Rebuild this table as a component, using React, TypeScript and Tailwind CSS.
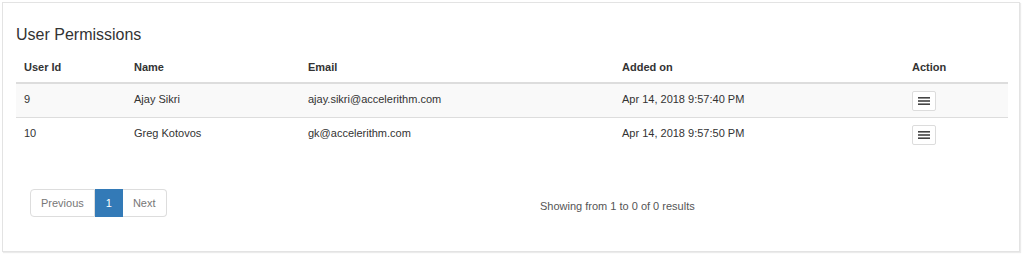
const USERS = [
  { id: 9, name: "Ajay Sikri", email: "ajay.sikri@accelerithm.com", added: "Apr 14, 2018 9:57:40 PM" },
  { id: 10, name: "Greg Kotovos", email: "gk@accelerithm.com", added: "Apr 14, 2018 9:57:50 PM" },
];

function MenuButton() {
  return (
    <button className="flex h-[20px] w-[24px] items-center justify-center rounded-[2px] border border-[#dcdcdc] bg-white">
      <svg width="12" height="10" viewBox="0 0 12 10">
        <rect x="0" y="1" width="12" height="1.6" fill="#444" />
        <rect x="0" y="4.2" width="12" height="1.6" fill="#444" />
        <rect x="0" y="7.4" width="12" height="1.6" fill="#444" />
      </svg>
    </button>
  );
}

export default function App() {
  return (
    <div className="h-[254px] w-[1024px] bg-white p-[2px] font-['Liberation_Sans',Arial,sans-serif] text-[11px] text-[#333]">
      <div className="h-[250px] w-[1018px] border border-[#e3e3e3] bg-white shadow-[1px_1px_1px_rgba(0,0,0,0.08)]">
        <div className="px-[13px] pt-[22px]">
          <h4 className="text-[16px] leading-[20px] text-[#333]">User Permissions</h4>
          <table className="mt-[4px] w-[992px] table-fixed border-collapse leading-[17px]">
            <colgroup>
              <col className="w-[110px]" />
              <col className="w-[174px]" />
              <col className="w-[314px]" />
              <col className="w-[290px]" />
              <col className="w-[104px]" />
            </colgroup>
            <thead>
              <tr className="border-b-2 border-[#dddddd] text-left">
                <th className="px-2 pb-[6px] pt-[10px] font-bold">User Id</th>
                <th className="px-2 pb-[6px] pt-[10px] font-bold">Name</th>
                <th className="px-2 pb-[6px] pt-[10px] font-bold">Email</th>
                <th className="px-2 pb-[6px] pt-[10px] font-bold">Added on</th>
                <th className="px-2 pb-[6px] pt-[10px] font-bold">Action</th>
              </tr>
            </thead>
            <tbody>
              {USERS.map((u, i) => (
                <tr key={u.id} className={`${i === 0 ? "bg-[#f9f9f9]" : "border-t border-[#dddddd]"} align-top`}>
                  <td className="px-2 pb-[9px] pt-[7px]">{u.id}</td>
                  <td className="px-2 pb-[9px] pt-[7px]">{u.name}</td>
                  <td className="px-2 pb-[9px] pt-[7px]">{u.email}</td>
                  <td className="px-2 pb-[9px] pt-[7px]">{u.added}</td>
                  <td className="px-2 pb-[5px] pt-[7px]">
                    <MenuButton />
                  </td>
                </tr>
              ))}
            </tbody>
          </table>
          <div className="mt-[38px] grid grid-cols-2 items-center">
            <div className="flex pl-[14px]">
              <div className="flex h-[28px] items-center rounded-l-[4px] border border-[#dddddd] px-[10px] text-[#777]">Previous</div>
              <div className="flex h-[28px] items-center border border-[#337ab7] bg-[#337ab7] px-[10px] text-white">1</div>
              <div className="flex h-[28px] items-center rounded-r-[4px] border border-l-0 border-[#dddddd] px-[10px] text-[#777]">Next</div>
            </div>
            <div className="pl-[29px] pt-[6px] text-[#555]">Showing from 1 to 0 of 0 results</div>
          </div>
        </div>
      </div>
    </div>
  );
}
